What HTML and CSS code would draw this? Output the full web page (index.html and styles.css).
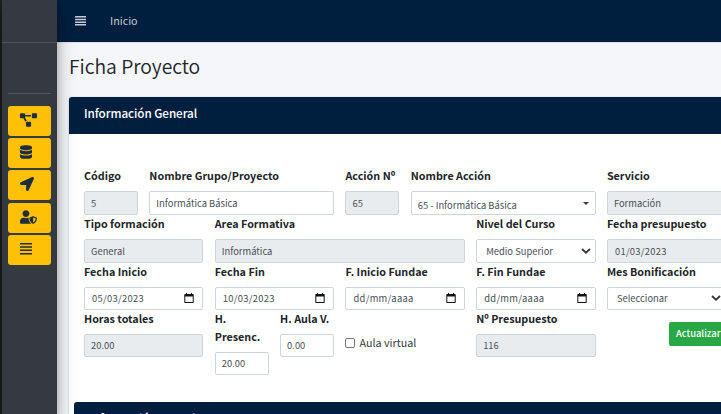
FILE: index.html
```html
<!DOCTYPE html>
<html lang="es">
<head>
<meta charset="utf-8">
<title>Ficha Proyecto</title>
<link rel="stylesheet" href="styles.css">
</head>
<body>
<svg class="defs" width="0" height="0">
  <symbol id="cal" viewBox="0 0 10 11"><path fill="#111" d="M1 1h1V0h1v1h4V0h1v1h1q.7 0 .7.7V9.300q0 .7-.7.7H1q-.7 0-.7-.7V1.700Q.3 1 1 1zM1.300 3.500V9h7.400V3.500z"/></symbol>
  <symbol id="chev" viewBox="0 0 10 6"><path fill="none" stroke="#343a40" stroke-width="1.900" d="M1 1l4 3.700L9 1"/></symbol>
</svg>
<div class="app">
  <div class="edge"></div>
  <aside class="sidebar">
    <div class="brand"></div>
    <div class="user"></div>
    <nav class="menu">
      <a class="tool"><svg width="17" height="14" viewBox="0 0 640 512"><path d="M384 320H256c-17.670 0-32 14.330-32 32v128c0 17.670 14.330 32 32 32h128c17.670 0 32-14.330 32-32V352c0-17.670-14.330-32-32-32zM192 32c0-17.670-14.330-32-32-32H32C14.330 0 0 14.330 0 32v128c0 17.670 14.330 32 32 32h95.720l73.160 128.040C211.980 300.980 232.400 288 256 288h.28L192 175.510V128h224V64H192V32zM608 0H480c-17.670 0-32 14.330-32 32v128c0 17.670 14.330 32 32 32h128c17.670 0 32-14.330 32-32V32c0-17.670-14.330-32-32-32z"/></svg></a>
      <a class="tool"><svg width="12" height="14" viewBox="0 0 448 512"><path d="M448 73.143v45.714C448 159.143 347.667 192 224 192S0 159.143 0 118.857V73.143C0 32.857 100.333 0 224 0s224 32.857 224 73.143zM448 176v102.857C448 319.143 347.667 352 224 352S0 319.143 0 278.857V176c48.125 33.143 136.208 48.572 224 48.572S399.874 209.143 448 176zm0 160v102.857C448 479.143 347.667 512 224 512S0 479.143 0 438.857V336c48.125 33.143 136.208 48.572 224 48.572S399.874 369.143 448 336z"/></svg></a>
      <a class="tool"><svg width="14" height="14" viewBox="0 0 512 512"><path d="M444.520 3.520L28.740 195.420c-47.970 22.390-31.980 92.750 19.190 92.750h175.910v175.910c0 51.170 70.360 67.170 92.750 19.190l191.900-415.780c15.990-38.390-25.590-79.970-63.970-63.970z"/></svg></a>
      <a class="tool low"><svg width="17" height="14" viewBox="0 0 640 512"><path fill-rule="evenodd" d="M622.300 271.100l-115.200-45c-4.100-1.600-12.600-3.700-22.200 0l-115.200 45c-10.700 4.200-17.700 14-17.700 24.900 0 111.600 68.700 188.800 132.900 213.900 9.600 3.700 18 1.600 22.200 0C558.400 489.900 640 420.500 640 296c0-10.900-7-20.700-17.700-24.900zM496 462.400V273.300l95.500 37.300c-5.600 87.100-60.900 135.400-95.500 151.800zM224 256c70.700 0 128-57.300 128-128S294.700 0 224 0 96 57.300 96 128s57.300 128 128 128zm96 40c0-2.500.8-4.800 1.100-7.200-2.500-.1-4.900-.8-7.500-.8h-16.700c-22.200 10.200-46.900 16-72.900 16s-50.600-5.800-72.900-16h-16.700C60.200 288 0 348.200 0 422.400V464c0 26.500 21.500 48 48 48h352c6.800 0 13.300-1.500 19.200-4-54-42.900-99.200-116.700-99.200-212z"/></svg></a>
      <a class="tool"><svg width="12" height="14" viewBox="0 0 12 14"><path d="M0 1h12v1.400H0zM0 4.300h12v1.400H0zM0 7.600h12V9H0zM0 11h12v1.400H0z"/></svg></a>
    </nav>
  </aside>
  <main class="main">
    <header class="navbar">
      <svg class="bars" width="11" height="10" viewBox="0 0 11 10"><path d="M0 0h11v1.500H0zM0 2.700h11v1.500H0zM0 5.400h11v1.500H0zM0 8.100h11v1.500H0z"/></svg>
      <span class="home">Inicio</span>
    </header>
    <h1 class="title">Ficha Proyecto</h1>
    <section class="card">
      <h2 class="card-head">Información General</h2>
      <div class="form">
        <div class="f c1"><label>Código</label><div class="in ro">5</div></div>
        <div class="f c3"><label>Nombre Grupo/Proyecto</label><div class="in">Informática Básica</div></div>
        <div class="f c1"><label>Acción Nº</label><div class="in ro">65</div></div>
        <div class="f c3"><label>Nombre Acción</label><div class="in combo"><span>65 - Informática Básica</span><i class="caret"></i></div></div>
        <div class="f c2"><label>Servicio</label><div class="in ro">Formación</div></div>

        <div class="f c2"><label>Tipo formación</label><div class="in ro">General</div></div>
        <div class="f c4"><label>Area Formativa</label><div class="in ro">Informática</div></div>
        <div class="f c2"><label>Nivel del Curso</label><div class="in sel"><span>Medio Superior</span><svg width="10" height="6"><use href="#chev"/></svg></div></div>
        <div class="f c2"><label>Fecha presupuesto</label><div class="in ro date"><span>01/03/2023</span></div></div>

        <div class="f c2 s"><label>Fecha Inicio</label><div class="in date"><span>05/03/2023</span><svg width="10" height="11"><use href="#cal"/></svg></div></div>
        <div class="f c2 s"><label>Fecha Fin</label><div class="in date"><span>10/03/2023</span><svg width="10" height="11"><use href="#cal"/></svg></div></div>
        <div class="f c2 s"><label>F. Inicio Fundae</label><div class="in date empty"><span>dd/mm/aaaa</span><svg width="10" height="11"><use href="#cal"/></svg></div></div>
        <div class="f c2 s"><label>F. Fin Fundae</label><div class="in date empty"><span>dd/mm/aaaa</span><svg width="10" height="11"><use href="#cal"/></svg></div></div>
        <div class="f c2 s"><label>Mes Bonificación</label><div class="in sel"><span>Seleccionar</span><svg width="10" height="6"><use href="#chev"/></svg></div></div>

        <div class="f c2 s"><label>Horas totales</label><div class="in ro">20.00</div></div>
        <div class="f c1 s"><label>H.<br>Presenc.</label><div class="in">20.00</div></div>
        <div class="f c1 s"><label>H. Aula V.</label><div class="in">0.00</div></div>
        <div class="f c2 check"><i class="box"></i><span>Aula virtual</span></div>
        <div class="f c2 s"><label>Nº Presupuesto</label><div class="in ro">116</div></div>
        <div class="f c2 action"><span class="btn">Actualizar</span></div>
      </div>
      <section class="subcard"><h2 class="card-head">Información consultor</h2></section>
    </section>
  </main>
</div>
</body>
</html>
```
FILE: styles.css
```css
* { box-sizing: border-box; }
body {
  margin: 0;
  width: 721px;
  height: 414px;
  overflow: hidden;
  background: #f4f6f9;
  color: #212529;
  font: 10.75px/18px "Noto Sans CJK SC", sans-serif;
}
.defs { display: block; height: 0; }
.app { display: flex; height: 414px; overflow: hidden; }
.edge { width: 2px; background: #1e1f1f; flex: none; }
.sidebar {
  position: relative;
  z-index: 2;
  flex: none;
  width: 55px;
  background: #343a40;
  box-shadow: 0 10px 21px rgba(0,0,0,.25), 0 7px 8px rgba(0,0,0,.22);
}
.brand { height: 43px; border-bottom: 1px solid #4b545c; }
.user { height: 51px; margin: 0 6px; border-bottom: 1px solid #4f5962; }
.menu { display: flex; flex-direction: column; gap: 2px; padding: 12px 6px 0; }
.tool {
  display: flex;
  height: 30px;
  padding: 7px 0 0 12px;
  border-radius: 3px;
  background: #ffc107;
}
.tool.low { margin-top: 1px; }
.tool svg { fill: #1f2d3d; }
.main { flex: none; width: 760px; }
.navbar {
  display: flex;
  align-items: center;
  height: 43px;
  padding-left: 18px;
  background: #001f3f;
  border-bottom: 1px solid #dee2e6;
}
.bars { fill: #c5cbd2; }
.home { margin-left: 24px; color: #c5cbd2; }
.title { margin: 9px 0 0 12px; font-size: 19.3px; font-weight: 350; line-height: 28px; }
.card {
  margin: 17px 0 0 12px;
  height: 500px;
  border-radius: 3px;
  background: #fff;
  box-shadow: 0 0 1px rgba(0,0,0,.3), 0 1px 2px rgba(0,0,0,.2);
}
.card-head {
  margin: 0;
  height: 37px;
  padding-left: 15px;
  border-radius: 3px 3px 0 0;
  background: #001f3f;
  color: #fff;
  font-size: 11.7px;
  font-weight: 500;
  letter-spacing: -.07px;
  line-height: 31px;
}
.form {
  display: grid;
  grid-template-columns: repeat(10, 54px);
  column-gap: 11.360px;
  grid-template-rows: 48px 48px 47px 68px;
  padding: 33px 0 0 15px;
  height: 268px;
}
.f.c1 { grid-column: span 1; }
.f.c2 { grid-column: span 2; }
.f.c3 { grid-column: span 3; }
.f.c4 { grid-column: span 4; }
.f label { display: block; margin-bottom: 6px; font-weight: 700; white-space: nowrap; }
.in {
  display: flex;
  align-items: center;
  height: 24px;
  padding: 0 6px;
  border: 1px solid #ced4da;
  border-radius: 2px;
  background: #fff;
  color: #495057;
  font-size: 9.400px;
  line-height: 14px;
  white-space: nowrap;
}
.s .in { height: 23px; line-height: 13px; padding-bottom: 1px; }
.ro { background: #e9ecef; }
.in svg { margin-left: auto; flex: none; }
.combo span { padding-top: 4px; }
.caret { margin-left: auto; border: 3px solid transparent; border-top-color: #343a40; border-bottom: 0; }
.sel { padding: 0 4px 0 9px; }
.date { padding: 0 8px 0 7px; }
.date span { letter-spacing: .3px; }
.check { display: flex; gap: 4px; padding-top: 24px; color: #343a40; }
.box { width: 10px; height: 10px; margin-top: 4px; border: 1px solid #767676; border-radius: 2px; }
.action { padding: 12px 0 0 62px; }
.btn {
  display: block;
  width: 60px;
  height: 24px;
  padding-left: 7px;
  border-radius: 2px;
  background: #28a745;
  color: #fff;
  font-size: 9.400px;
  font-weight: 500;
  line-height: 23px;
}
.subcard { margin-left: 5px; }
```
